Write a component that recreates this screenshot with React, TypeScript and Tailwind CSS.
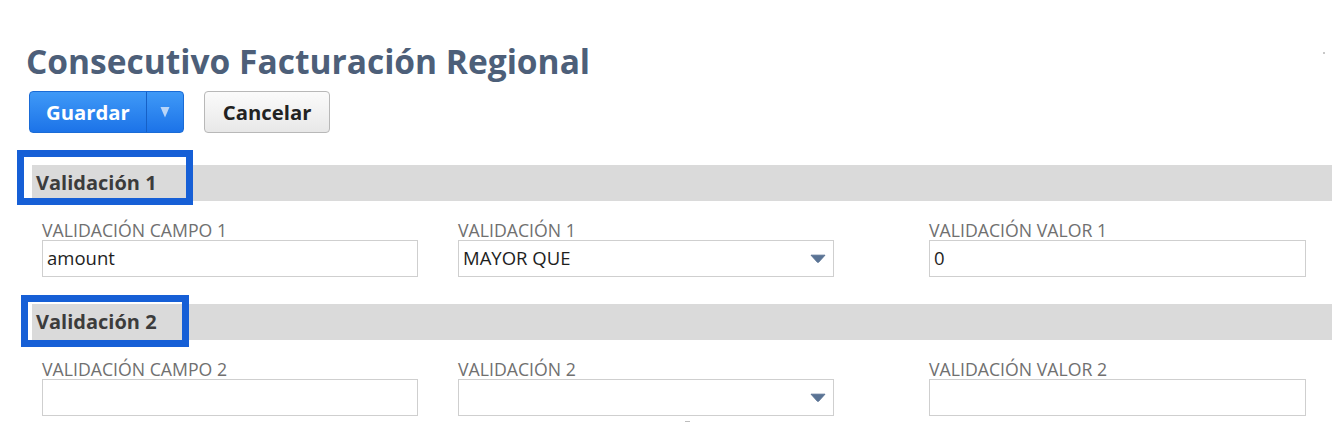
import React from "react";

function Field({ label, value, select, w }: { label: string; value?: string; select?: boolean; w: string }) {
  return (
    <div className="flex flex-col">
      <div className="text-[17.7px] leading-[20px] text-[#707070] whitespace-nowrap">{label}</div>
      <div className={`${w} h-[37px] border border-[#cfcfcf] bg-white flex items-center justify-between pl-[4px] pr-[7px]`}>
        <span className="text-[18.5px] text-[#1e1e1e] leading-none">{value ?? ""}</span>
        {select && (
          <svg width="16" height="9" viewBox="0 0 16 9">
            <path d="M1 1.2 L15 1.2 L8.6 8.2 Q8 8.8 7.4 8.2 Z" fill="#5a7394" stroke="#5a7394" strokeWidth="1" strokeLinejoin="round" />
          </svg>
        )}
      </div>
    </div>
  );
}

function Section({ n, value1, value2, value3 }: { n: number; value1?: string; value2?: string; value3?: string }) {
  return (
    <div className="flex flex-col">
      <div className="ml-[32px] mr-[5px] h-[36px] bg-[#dadada] flex items-center pl-[4px]">
        <span className="text-[20px] font-bold text-[#3c3c3c]">Validación {n}</span>
      </div>
      <div className="mt-[19px] ml-[42px] grid grid-cols-[416px_471px_1fr]">
        <Field label={`VALIDACIÓN CAMPO ${n}`} value={value1} w="w-[376px]" />
        <Field label={`VALIDACIÓN ${n}`} value={value2} select w="w-[376px]" />
        <Field label={`VALIDACIÓN VALOR ${n}`} value={value3} w="w-[377px]" />
      </div>
    </div>
  );
}

export default function App() {
  return (
    <div className="relative w-[1337px] h-[424px] overflow-hidden bg-white font-['Open_Sans',sans-serif]">
      <div className="pt-[41px] pl-[26px] text-[33.5px] leading-[40px] font-bold text-[#4d5f79] whitespace-nowrap">
        Consecutivo Facturación Regional
      </div>
      <div className="mt-[10px] ml-[29px] flex gap-[20px]">
        <div className="h-[42px] flex rounded-[4px] border border-[#1a6bd6] bg-gradient-to-b from-[#3f99f7] to-[#1c73e8] text-white">
          <div className="flex items-center px-[16px] text-[20.3px] font-bold">Guardar</div>
          <div className="w-px bg-[#1660c6]" />
          <div className="w-[36px] flex items-center justify-center">
            <svg width="10" height="12" viewBox="0 0 10 12">
              <path d="M0.5 1 L9.5 1 L5 11.5 Z" fill="#b9d5f8" />
            </svg>
          </div>
        </div>
        <div className="h-[42px] flex items-center px-[18px] rounded-[4px] border border-[#b8b8b8] bg-gradient-to-b from-[#fbfbfb] to-[#e8e8e8] text-[20.3px] font-bold text-[#222]">
          Cancelar
        </div>
      </div>
      <div className="mt-[32px]">
        <Section n={1} value1="amount" value2="MAYOR QUE" value3="0" />
      </div>
      <div className="mt-[27px]">
        <Section n={2} />
      </div>

      <div className="absolute left-[17px] top-[150px] w-[176px] h-[55px] border-[7px] border-[#165fd6]" />
      <div className="absolute left-[21px] top-[295px] w-[168px] h-[52px] border-[7px] border-[#165fd6]" />
      <div className="absolute left-[1323px] top-[52px] w-[2px] h-[2px] bg-[#c8c8c8]" />
      <div className="absolute left-[685px] top-[421px] w-[5px] h-[1px] bg-[#bdbdbd]" />
    </div>
  );
}
